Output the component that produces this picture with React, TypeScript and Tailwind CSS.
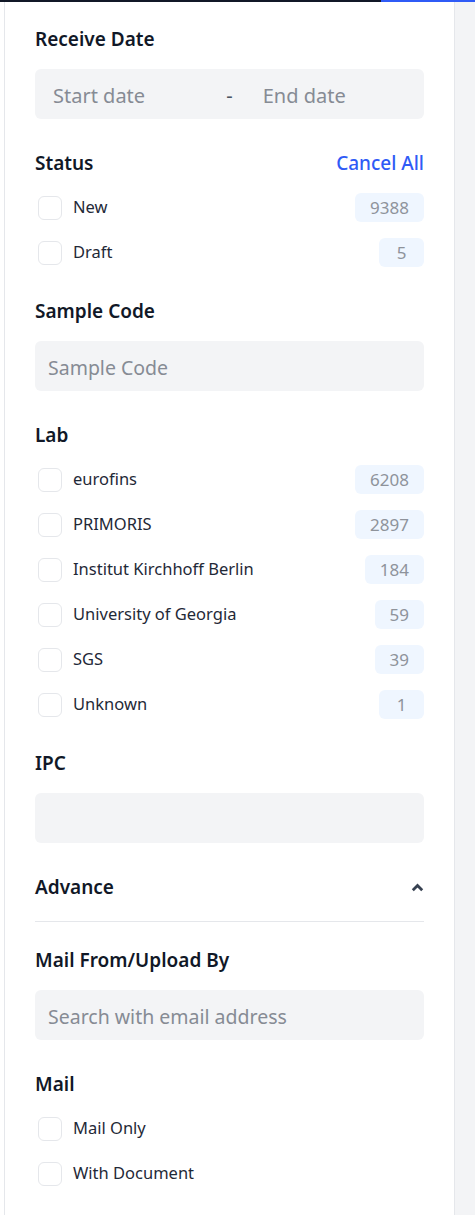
import { useState } from 'react'

interface Option {
  label: string
  count?: number
}

const statusOptions: Option[] = [
  { label: 'New', count: 9388 },
  { label: 'Draft', count: 5 },
]

const labOptions: Option[] = [
  { label: 'eurofins', count: 6208 },
  { label: 'PRIMORIS', count: 2897 },
  { label: 'Institut Kirchhoff Berlin', count: 184 },
  { label: 'University of Georgia', count: 59 },
  { label: 'SGS', count: 39 },
  { label: 'Unknown', count: 1 },
]

const mailOptions: Option[] = [{ label: 'Mail Only' }, { label: 'With Document' }]

function Heading({ children, right }: { children: React.ReactNode; right?: React.ReactNode }) {
  return (
    <div className="flex h-7 items-center justify-between">
      <h3 className="text-[19px] font-semibold text-[#111827]">{children}</h3>
      {right}
    </div>
  )
}

function TextInput({ placeholder }: { placeholder?: string }) {
  return (
    <input
      type="text"
      placeholder={placeholder}
      className="mt-4 block h-[50px] w-full rounded-md bg-[#f3f4f6] px-[13px] pt-[3px] text-[19.5px] text-[#1f2937] outline-none placeholder:text-[#868b94]"
    />
  )
}

function CheckList({ options }: { options: Option[] }) {
  const [checked, setChecked] = useState<Record<string, boolean>>({})

  return (
    <div className="mt-4 flex flex-col gap-4">
      {options.map((opt) => (
        <label key={opt.label} className="flex h-[29px] cursor-pointer items-center justify-between">
          <div className="flex items-center">
            <span
              onClick={() => setChecked((prev) => ({ ...prev, [opt.label]: !prev[opt.label] }))}
              className={`ml-[3px] block h-6 w-6 rounded-md border ${checked[opt.label] ? 'border-[#2f5bf6] bg-[#2f5bf6]' : 'border-[#e5e7eb] bg-white'}`}
            ></span>
            <span className="ml-[11px] text-[16.5px] text-[#1f2937]">{opt.label}</span>
          </div>
          {opt.count !== undefined && (
            <span className="flex h-[29px] min-w-[45px] items-center justify-center rounded-md bg-[#eff6ff] px-[15px] text-[17px] text-[#8e939b]">
              {opt.count}
            </span>
          )}
        </label>
      ))}
    </div>
  )
}

export default function App() {
  const [advanceOpen, setAdvanceOpen] = useState(true)

  return (
    <div className="min-h-[1215px] w-full bg-white" style={{ fontFamily: '"Noto Sans", "Open Sans", sans-serif' }}>
      {/* Top progress bar */}
      <div className="flex h-[2px]">
        <div className="w-[381px] bg-[#111827]"></div>
        <div className="flex-1 bg-[#2f5bf6]"></div>
      </div>

      <div className="flex min-h-[1213px]">
        <div className="w-[4px] bg-white"></div>

        {/* Filter panel */}
        <div className="w-[451px] border-x border-[#e5e7eb] bg-white px-[30px] pb-10 pt-[23px]">
          <Heading>Receive Date</Heading>
          <div className="mt-4 flex h-[50px] items-center rounded-md bg-[#f3f4f6] px-[18px] pt-[3px] text-[20px]">
            <input
              type="text"
              placeholder="Start date"
              className="w-0 flex-1 bg-transparent outline-none placeholder:text-[#868b94]"
            />
            <span className="px-[30px] text-[#4b5563]">-</span>
            <input
              type="text"
              placeholder="End date"
              className="w-0 flex-1 bg-transparent outline-none placeholder:text-[#868b94]"
            />
          </div>

          <div className="mt-[30px]">
            <Heading right={<button className="text-[19px] font-medium text-[#2f5bf6]">Cancel All</button>}>
              Status
            </Heading>
            <CheckList options={statusOptions} />
          </div>

          <div className="mt-[30px]">
            <Heading>Sample Code</Heading>
            <TextInput placeholder="Sample Code" />
          </div>

          <div className="mt-[30px]">
            <Heading>Lab</Heading>
            <CheckList options={labOptions} />
          </div>

          <div className="mt-[30px]">
            <Heading>IPC</Heading>
            <TextInput />
          </div>

          {/* Advance */}
          <div className="mt-[30px]">
            <button onClick={() => setAdvanceOpen(!advanceOpen)} className="block w-full text-left">
              <Heading
                right={
                  <svg
                    width="13"
                    height="9"
                    viewBox="0 0 13 9"
                    className={advanceOpen ? '' : 'rotate-180'}
                  >
                    <path d="M1.8 7.2 L6.5 2.5 L11.2 7.2" fill="none" stroke="#374151" strokeWidth="2.8" />
                  </svg>
                }
              >
                Advance
              </Heading>
            </button>
            <div className="mt-5 h-px bg-[#e5e7eb]"></div>
          </div>

          {advanceOpen && (
            <>
              <div className="mt-6">
                <Heading>Mail From/Upload By</Heading>
                <TextInput placeholder="Search with email address" />
              </div>

              <div className="mt-[30px]">
                <Heading>Mail</Heading>
                <CheckList options={mailOptions} />
              </div>
            </>
          )}
        </div>

        <div className="flex-1 bg-[#f3f4f6]"></div>
      </div>
    </div>
  )
}
